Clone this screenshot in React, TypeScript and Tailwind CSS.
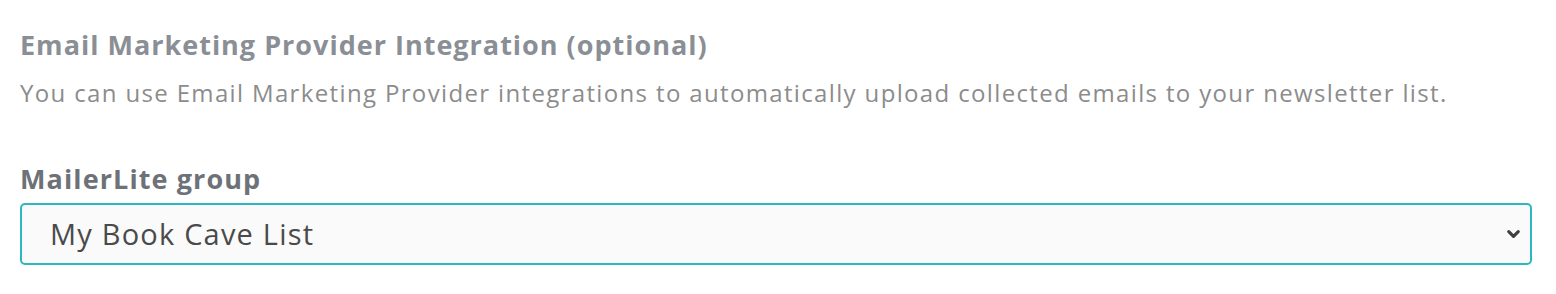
import { ChevronDown } from "lucide-react";

export default function App() {
  return (
    <div className="w-[1556px] h-[294px] bg-white px-5 pt-[27px] font-['Open_Sans',sans-serif]">
      <h3 className="text-[27px] leading-[36px] font-bold tracking-[1px] text-[#8a8e95]">
        Email Marketing Provider Integration (optional)
      </h3>
      <p className="mt-[15px] text-[24px] leading-[30px] tracking-[1.35px] text-[#8c8c8c]">
        You can use Email Marketing Provider integrations to automatically upload collected emails to your newsletter list.
      </p>
      <label className="block mt-[53px] text-[27px] leading-[36px] font-bold tracking-[1.1px] text-[#6d7178]">
        MailerLite group
      </label>
      <div className="relative mt-[6px] w-[1512px]">
        <select className="appearance-none w-full h-[62px] rounded-[5px] border-2 border-[#2bb7c3] bg-[#fafafa] pl-[28px] text-[29px] tracking-[1.2px] text-[#4a4a4a] outline-none">
          <option>My Book Cave List</option>
        </select>
        <ChevronDown
          className="pointer-events-none absolute right-[9px] top-1/2 -translate-y-1/2 text-[#3f3f3f]"
          size={19}
          strokeWidth={4}
        />
      </div>
    </div>
  );
}
